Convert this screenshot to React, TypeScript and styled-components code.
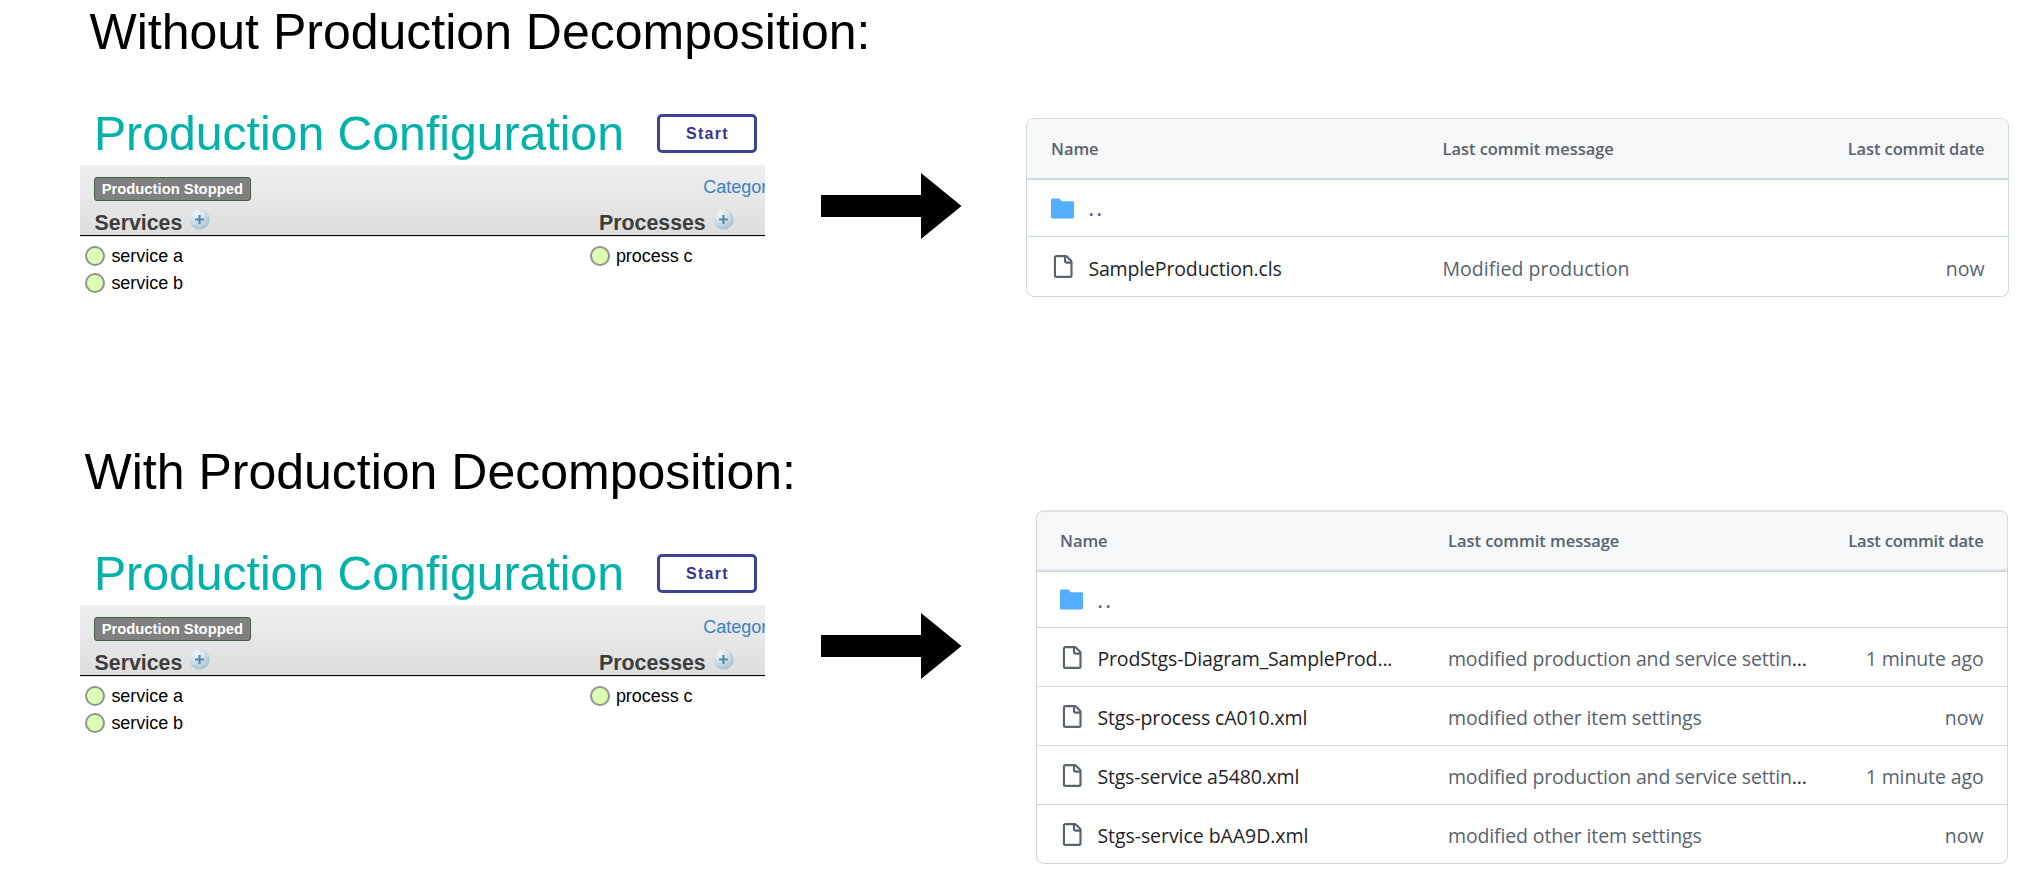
import React from "react";
import styled, { createGlobalStyle } from "styled-components";

const GlobalStyle = createGlobalStyle`
  *, *::before, *::after { box-sizing: border-box; }
  body {
    margin: 0;
    background: #fff;
    color: #000;
    font-family: "Liberation Sans", Arial, sans-serif;
    overflow: hidden;
  }
`;

const Page = styled.main`
  display: flex;
  flex-direction: column;
  width: 2024px;
  height: 880px;
`;

const Comparison = styled.section`
  height: 440px;
  padding-top: 2px;
`;

const Heading = styled.h1<{ $indent: number }>`
  margin: 0;
  padding-left: ${(p) => p.$indent}px;
  height: 60px;
  font-size: 50px;
  font-weight: 400;
  line-height: 60px;
  white-space: nowrap;
`;

const Columns = styled.div`
  display: flex;
  align-items: flex-start;
  padding-left: 80px;
`;

/* Production configuration panel */

const Panel = styled.article`
  width: 685px;
  margin-top: 41px;
  flex: none;
  overflow: hidden;
`;

const PanelHeader = styled.header`
  display: flex;
  justify-content: space-between;
  align-items: flex-start;
  height: 62px;
  padding: 0 8px 0 14px;
`;

const PanelTitle = styled.h2`
  margin: 0;
  color: #00b2a9;
  font-size: 48.2px;
  font-weight: 400;
  line-height: 60px;
  letter-spacing: -0.02px;
  white-space: nowrap;
`;

const StartButton = styled.button`
  width: 100px;
  height: 39px;
  margin-top: 11px;
  padding: 0;
  border: 3px solid #3f429b;
  border-radius: 5px;
  background: #fff;
  color: #333695;
  font: bold 16px "Liberation Sans", Arial, sans-serif;
  letter-spacing: 1.3px;
  text-indent: 1px;
`;

const Toolbar = styled.div`
  height: 71px;
  padding: 12px 0 0 14px;
  border-bottom: 1px solid #000;
  background: linear-gradient(#efefef, #dedede);
`;

const ToolbarTop = styled.div`
  display: flex;
  height: 24px;
`;

const StatusBadge = styled.span`
  width: 157px;
  height: 24px;
  border: 1px solid #41613f;
  border-radius: 3px;
  background: #808080;
  color: #fff;
  font-size: 14.8px;
  font-weight: 700;
  line-height: 23px;
  text-align: center;
  white-space: nowrap;
`;

const CategoryLink = styled.a`
  width: 62px;
  margin: -2px 0 0 452.5px;
  overflow: hidden;
  color: #3c83c0;
  font-size: 18px;
  line-height: 24px;
  white-space: nowrap;
`;

const Split = styled.div`
  display: grid;
  grid-template-columns: 504.5px 1fr;
`;

const GroupHeadings = styled(Split)`
  margin-top: 7px;
`;

const GroupHeading = styled.h3`
  display: flex;
  gap: 7px;
  margin: 0;
  padding-left: 0.6px;
  color: #3c3c3c;
  font-size: 21.3px;
  line-height: 31px;
`;

const Items = styled(Split)`
  padding: 10px 0 0 5.4px;
  box-shadow: inset 0 1px #e2e2e2;
`;

const ItemList = styled.ul`
  display: flex;
  flex-direction: column;
  gap: 7px;
  margin: 0;
  padding: 0;
  list-style: none;
`;

const Item = styled.li`
  display: flex;
  gap: 6px;
  font-size: 18px;
  line-height: 20px;
  letter-spacing: -0.04px;
`;

const StatusDot = styled.i`
  width: 20px;
  height: 20px;
  border: 2px solid #8f9489;
  border-radius: 50%;
  background: #dcffb4;
`;

const AddIcon = () => (
  <svg width="21" height="22" viewBox="0 0 21 22">
    <defs>
      <radialGradient id="orb" cx="0.36" cy="0.25" r="0.8">
        <stop offset="0" stopColor="#f2f6f8" />
        <stop offset="0.5" stopColor="#d3e0e8" />
        <stop offset="1" stopColor="#9cbdd2" />
      </radialGradient>
    </defs>
    <circle cx="10.5" cy="11.3" r="10.2" fill="url(#orb)" />
    <path d="M10.5 7v9M6 11.5h9" stroke="#5389aa" strokeWidth="2.2" />
  </svg>
);

const ArrowDrawing = styled.svg`
  flex: none;
  margin: 111px 0 0 56px;
`;

const Arrow = () => (
  <ArrowDrawing width="141" height="66" viewBox="0 0 141 66">
    <path d="M0 22H100V0L140.5 33L100 66V44H0Z" fill="#000" />
  </ArrowDrawing>
);

/* Repository file listing */

const FileTable = styled.div<{ $compact?: boolean }>`
  flex: none;
  width: ${(p) => (p.$compact ? 972 : 983)}px;
  margin: ${(p) => (p.$compact ? "8px 0 0 74px" : "56px 0 0 64px")};
  border: 1px solid #d1d9e0;
  border-top: ${(p) => (p.$compact ? "2px solid #dee3e8" : "1px solid #d1d9e0")};
  border-radius: 8px;
  overflow: hidden;
  background: #fff;
  color: #59636e;
  font-family: "Open Sans", "Noto Sans", sans-serif;
  --inset: ${(p) => (p.$compact ? 23 : 24)}px;
  --message: ${(p) => (p.$compact ? 388 : 391.5)}px;
`;

const TableRow = styled.div<{ $height: number }>`
  display: grid;
  grid-template-columns: var(--message) 1fr auto;
  align-items: center;
  height: ${(p) => p.$height}px;
  padding: 0 23.5px 0 var(--inset);
  font-size: 19.5px;
  line-height: 28px;
  white-space: nowrap;

  & + & {
    border-top: 1px solid #d1d9e0;
  }
`;

const TableHead = styled(TableRow)<{ $soft?: boolean }>`
  border-bottom: ${(p) => (p.$soft ? "2px solid #dee3e8" : "1px solid #d1d9e0")};
  background: #f6f8fa;
  font-size: 16.5px;
  font-weight: 600;
  letter-spacing: -0.04px;
`;

const DateHead = styled.span<{ $track: number }>`
  letter-spacing: ${(p) => p.$track}px;
`;

const NameCell = styled.div`
  display: flex;
  align-items: center;
  gap: 14.4px;
  color: #1f2328;
`;

const CellText = styled.span<{ $track?: number }>`
  padding-top: 4px;
  letter-spacing: ${(p) => p.$track ?? 0}px;
`;

const ParentLink = styled(CellText)`
  padding-top: 2px;
  color: #59636e;
  font-weight: 600;
`;

const Ellipsis = styled.span`
  color: #1f2328;
`;

const FolderIcon = () => (
  <svg width="23" height="23" viewBox="0 0 16 16" fill="#54aeff">
    <path d="M1 1A1 1 0 0 0 0 2v12a1 1 0 0 0 1 1h14a1 1 0 0 0 1-1V4a1 1 0 0 0-1-1H7.5L6.4 1.6C6.1 1.2 5.7 1 5.2 1Z" />
  </svg>
);

const FileIcon = () => (
  <svg width="23" height="23" viewBox="0 0 16 16" fill="#59636e">
    <path d="M2 1.75C2 .784 2.784 0 3.75 0h6.586c.464 0 .909.184 1.237.513l2.914 2.914c.329.328.513.773.513 1.237v9.586A1.75 1.75 0 0 1 13.25 16h-9.5A1.75 1.75 0 0 1 2 14.25Zm1.75-.25a.25.25 0 0 0-.25.25v12.5c0 .138.112.25.25.25h9.5a.25.25 0 0 0 .25-.25V6h-2.75A1.75 1.75 0 0 1 9 4.25V1.5Zm6.75.062V4.25c0 .138.112.25.25.25h2.688l-.011-.013-2.914-2.914-.013-.011Z" />
  </svg>
);

interface FileEntry {
  name: string;
  nameTrack: number;
  message: string;
  messageTrack: number;
  cut?: boolean;
  date: string;
  dateTrack?: number;
  height: number;
}

const singleFile: FileEntry[] = [
  { name: "SampleProduction.cls", nameTrack: -0.15, message: "Modified production", messageTrack: 0.05, date: "now", height: 60 },
];

const splitFiles: FileEntry[] = [
  { name: "ProdStgs-Diagram_SampleProd...", nameTrack: -0.14, message: "modified production and service settin", messageTrack: -0.18, cut: true, date: "1 minute ago", dateTrack: -0.12, height: 59 },
  { name: "Stgs-process cA010.xml", nameTrack: -0.13, message: "modified other item settings", messageTrack: -0.14, date: "now", height: 59 },
  { name: "Stgs-service a5480.xml", nameTrack: -0.18, message: "modified production and service settin", messageTrack: -0.18, cut: true, date: "1 minute ago", dateTrack: -0.12, height: 59 },
  { name: "Stgs-service bAA9D.xml", nameTrack: -0.06, message: "modified other item settings", messageTrack: -0.14, date: "now", height: 59 },
];

function Listing({ files, compact }: { files: FileEntry[]; compact?: boolean }) {
  return (
    <FileTable $compact={compact}>
      <TableHead $height={compact ? 59 : 60} $soft={compact}>
        <span>Name</span>
        <span>Last commit message</span>
        <DateHead $track={compact ? -0.2 : -0.1}>Last commit date</DateHead>
      </TableHead>
      <TableRow $height={compact ? 56 : 57}>
        <NameCell>
          <FolderIcon />
          <ParentLink $track={2.8}>..</ParentLink>
        </NameCell>
      </TableRow>
      {files.map((f) => (
        <TableRow key={f.name} $height={f.height}>
          <NameCell>
            <FileIcon />
            <CellText $track={f.nameTrack}>{f.name}</CellText>
          </NameCell>
          <CellText $track={f.messageTrack}>
            {f.message}
            {f.cut && <Ellipsis>...</Ellipsis>}
          </CellText>
          <CellText $track={f.dateTrack}>{f.date}</CellText>
        </TableRow>
      ))}
    </FileTable>
  );
}

function ItemRow({ label }: { label: string }) {
  return (
    <Item>
      <StatusDot />
      {label}
    </Item>
  );
}

function ProductionPanel() {
  return (
    <Panel>
      <PanelHeader>
        <PanelTitle>Production Configuration</PanelTitle>
        <StartButton>Start</StartButton>
      </PanelHeader>
      <Toolbar>
        <ToolbarTop>
          <StatusBadge>Production Stopped</StatusBadge>
          <CategoryLink>Categor</CategoryLink>
        </ToolbarTop>
        <GroupHeadings>
          <GroupHeading>
            Services
            <AddIcon />
          </GroupHeading>
          <GroupHeading>
            Processes
            <AddIcon />
          </GroupHeading>
        </GroupHeadings>
      </Toolbar>
      <Items>
        <ItemList>
          <ItemRow label="service a" />
          <ItemRow label="service b" />
        </ItemList>
        <ItemList>
          <ItemRow label="process c" />
        </ItemList>
      </Items>
    </Panel>
  );
}

export default function App() {
  return (
    <Page>
      <GlobalStyle />
      <Comparison>
        <Heading $indent={89.5}>Without Production Decomposition:</Heading>
        <Columns>
          <ProductionPanel />
          <Arrow />
          <Listing files={singleFile} />
        </Columns>
      </Comparison>
      <Comparison>
        <Heading $indent={84.5}>With Production Decomposition:</Heading>
        <Columns>
          <ProductionPanel />
          <Arrow />
          <Listing files={splitFiles} compact />
        </Columns>
      </Comparison>
    </Page>
  );
}
